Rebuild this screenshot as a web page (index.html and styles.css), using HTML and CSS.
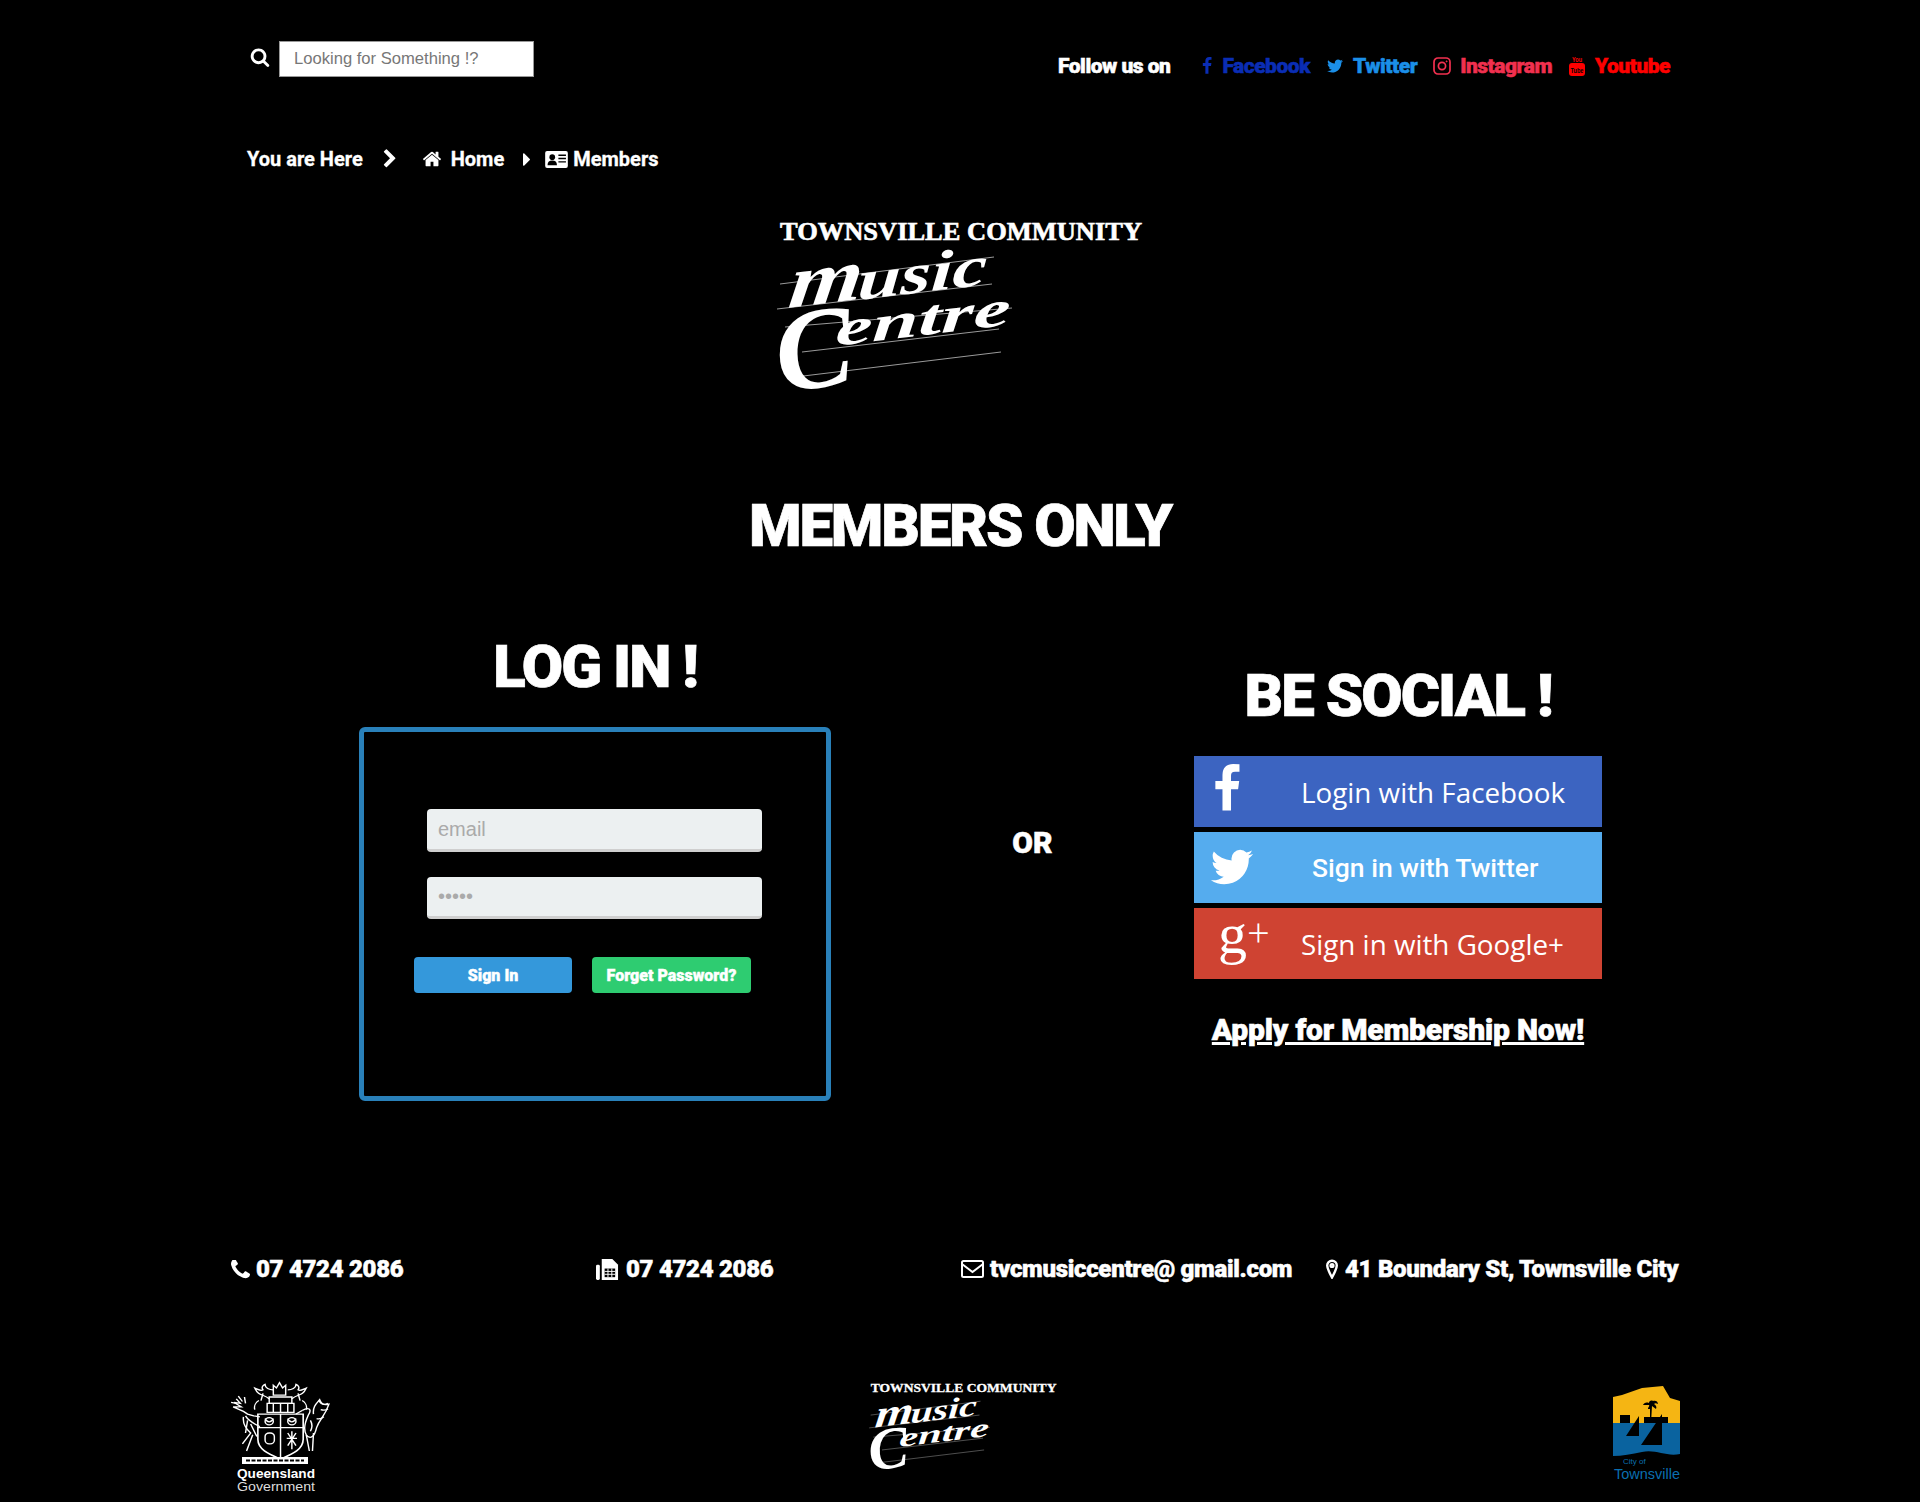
FILE: index.html
```html
<!DOCTYPE html>
<html lang="en">
  <head>
    <meta charset="UTF-8" />
    <title>Members Only</title>
    <link rel="stylesheet" href="styles.css">
  </head>

  <body>
    <svg class="defs" width="0" height="0">
      <symbol id="i-search" viewBox="0 0 1792 1792"><path d="M1216 832q0-185-131.500-316.500t-316.500-131.500-316.500 131.500-131.500 316.500 131.500 316.500 316.500 131.500 316.500-131.500 131.500-316.500zm512 832q0 52-38 90t-90 38q-54 0-90-38l-343-342q-179 124-399 124-143 0-273.500-55.500t-225-150-150-225-55.500-273.500 55.500-273.500 150-225 225-150 273.500-55.500 273.500 55.500 225 150 150 225 55.500 273.500q0 220-124 399l343 343q37 37 37 90z"/></symbol>
      <symbol id="i-f" viewBox="0 0 1792 1792"><path d="M1343 12v264h-157q-86 0-116 36t-30 108v189h293l-39 296h-254v759h-306v-759h-255v-296h255v-218q0-186 104-288.500t277-102.500q147 0 228 12z"/></symbol>
      <symbol id="i-tw" viewBox="0 0 1792 1792"><path d="M1684 408q-67 98-162 167 1 14 1 42 0 130-38 259.500t-115.500 248.500-184.500 210.500-258 146-323 54.500q-271 0-496-145 35 4 78 4 225 0 401-138-105-2-188-64.500t-114-159.500q33 5 61 5 43 0 85-11-112-23-185.500-111.500t-73.500-205.500v-4q68 38 146 41-66-44-105-115t-39-154q0-88 44-163 121 149 294.500 238.500t371.500 99.500q-8-38-8-74 0-134 94.500-228.500t228.500-94.500q140 0 236 102 109-21 205-78-37 115-142 178 92-10 184-50z"/></symbol>
    </svg>

    <div class="page">
      <div class="top">
        <div class="search">
          <svg class="search-icon" fill="#fff"><use href="#i-search" /></svg>
          <input class="search-input" type="text" placeholder="Looking for Something !?" />
        </div>
        <div class="follow">
          <span class="follow-label">Follow us on</span>
          <a class="soc soc-fb"><svg fill="currentColor"><use href="#i-f" /></svg>Facebook</a>
          <a class="soc soc-tw"><svg fill="currentColor"><use href="#i-tw" /></svg>Twitter</a>
          <a class="soc soc-in">
            <svg viewBox="0 0 18 18" fill="none" stroke="currentColor" stroke-width="1.700">
              <rect x="1" y="1" width="16" height="16" rx="4" />
              <circle cx="9" cy="9" r="3.600" />
              <circle cx="13.600" cy="4.400" r="0.600" fill="currentColor" stroke-width="0.700" />
            </svg>Instagram</a>
          <a class="soc soc-yt">
            <svg class="yt-icon" viewBox="0 0 18 21" fill="currentColor">
              <text class="yt-you" x="9" y="6.500" text-anchor="middle" textLength="10" lengthAdjust="spacingAndGlyphs">You</text>
              <rect x="1" y="8" width="16" height="13" rx="3" />
              <text class="yt-tube" x="9" y="17.500" text-anchor="middle" textLength="13" lengthAdjust="spacingAndGlyphs">Tube</text>
            </svg>Youtube</a>
        </div>
      </div>

      <div class="crumbs">
        <span class="crumb-here">You are Here</span>
        <svg class="crumb-chev" fill="#fff" viewBox="0 0 1792 1792"><path d="M1363 877l-742 742q-19 19-45 19t-45-19l-166-166q-19-19-19-45t19-45l531-531-531-531q-19-19-19-45t19-45l166-166q19-19 45-19t45 19l742 742q19 19 19 45t-19 45z"/></svg>
        <svg class="crumb-home" fill="#fff" viewBox="0 0 1792 1792"><path d="M1472 992v480q0 26-19 45t-45 19h-384v-384h-256v384h-384q-26 0-45-19t-19-45v-480q0-1 .5-3t.5-3l575-474 575 474q1 2 1 6zm223-69l-62 74q-8 9-21 11h-3q-13 0-21-7l-692-577-692 577q-12 8-24 7-13-2-21-11l-62-74q-8-10-7-23.500t11-21.500l719-599q32-26 76-26t76 26l244 204v-195q0-14 9-23t23-9h192q14 0 23 9t9 23v408l219 182q10 8 11 21.500t-7 23.500z"/></svg>
        <span class="crumb-link">Home</span>
        <svg class="crumb-caret" fill="#fff" viewBox="576 384 576 1024"><path d="M1152 896q0 26-19 45l-448 448q-19 19-45 19t-45-19-19-45v-896q0-26 19-45t45-19 45 19l448 448q19 19 19 45z"/></svg>
        <svg class="crumb-id" viewBox="0 0 24 18">
          <rect width="24" height="18" rx="2" fill="#fff" />
          <circle cx="7.500" cy="6.500" r="3" fill="#000" />
          <path d="M2.500 15c0-3.500 2-5 5-5s5 1.500 5 5z" fill="#000" />
          <path d="M14 4.500h8M14 8h8M14 11.500h8" stroke="#000" stroke-width="1.500" />
        </svg>
        <span class="crumb-link">Members</span>
      </div>

      <svg class="logo-main" viewBox="-14 -6 380 206" fill="#fff">
        <text class="logo-top" x="1" y="20" textLength="362" lengthAdjust="spacingAndGlyphs">TOWNSVILLE COMMUNITY</text>
        <g stroke="#ddd" stroke-width="0.700">
          <line x1="1" y1="64" x2="215" y2="37" />
          <line x1="-2" y1="89" x2="213" y2="64" />
          <line x1="6" y1="107" x2="233" y2="88" />
          <line x1="23" y1="132" x2="220" y2="109" />
          <line x1="16" y1="157" x2="222" y2="132" />
        </g>
        <text class="logo-script" transform="translate(8 88) rotate(-7) skewX(-14)" font-size="74" textLength="74" lengthAdjust="spacingAndGlyphs">m</text>
        <text class="logo-script" transform="translate(78 80) rotate(-7) skewX(-10)" font-size="56" textLength="130" lengthAdjust="spacingAndGlyphs">usic</text>
        <text class="logo-script" transform="translate(1 172) rotate(-7)" font-size="116">C</text>
        <text class="logo-script" transform="translate(56 126) rotate(-7) skewX(-10)" font-size="50" textLength="176" lengthAdjust="spacingAndGlyphs">entre</text>
      </svg>

      <h1 class="title">MEMBERS ONLY</h1>

      <div class="columns">
        <div class="col-login">
          <h2 class="col-title">LOG IN !</h2>
          <div class="login-box">
            <input class="field" type="text" placeholder="email" />
            <input class="field" type="password" placeholder="•••••" />
            <div class="login-btns">
              <a class="btn btn-blue">Sign In</a>
              <a class="btn btn-green">Forget Password?</a>
            </div>
          </div>
        </div>

        <div class="col-or">OR</div>

        <div class="col-social">
          <h2 class="col-title">BE SOCIAL !</h2>
          <a class="social-btn sb-fb"><svg class="sb-f" fill="#fff"><use href="#i-f" /></svg><span class="sb-text">Login with Facebook</span></a>
          <a class="social-btn sb-tw"><svg class="sb-bird" fill="#fff"><use href="#i-tw" /></svg><span class="sb-text sb-text-tw">Sign in with Twitter</span></a>
          <a class="social-btn sb-gp"><span class="sb-g">g<i>+</i></span><span class="sb-text">Sign in with Google+</span></a>
          <a class="apply">Apply for Membership Now!</a>
        </div>
      </div>

      <div class="contacts">
        <div class="contact">
          <svg class="ci-phone" fill="#fff" viewBox="192 192 1408 1408"><path d="M1600 1240q0 27-10 70.500t-21 68.500q-21 50-122 106-94 51-186 51-27 0-53-3.500t-57.500-12.500-47-14.500-55.500-20.500-49-18q-98-35-175-83-127-79-264-216t-216-264q-48-77-83-175-3-9-18-49t-20.500-55.500-14.500-47-12.500-57.500-3.500-53q0-92 51-186 56-101 106-122 25-11 68.500-21t70.500-10q14 0 21 3 18 6 53 76 11 19 30 54t35 63.500 31 53.500q3 4 17.500 25t21.500 35.500 7 28.500q0 20-28.500 50t-62 55-62 53-28.500 46q0 9 5 22.500t8.500 20.500 14 24 11.500 19q76 137 174 235t235 174q2 1 19 11.500t24 14 20.500 8.500 22.500 5q18 0 46-28.500t53-62 55-62 50-28.500q14 0 28.500 7t35.500 21.500 25 17.500q25 15 53.500 31t63.500 35 54 30q70 35 76 53 3 7 3 21z"/></svg>
          07 4724 2086
        </div>
        <div class="contact contact-wide">
          <svg class="ci-fax" viewBox="0 0 24 24">
            <rect x="0" y="7" width="4" height="16" rx="1.500" fill="#fff" />
            <path d="M6 1h11l6 6v16H6z" fill="#fff" />
            <path d="M9 11h11v9H9z" fill="#000" />
            <path d="M12.500 11v9M16.500 11v9M9 14h11M9 17h11" stroke="#fff" stroke-width="1" />
          </svg>
          07 4724 2086
        </div>
        <div class="contact">
          <svg class="ci-mail" viewBox="0 0 23 18" fill="none" stroke="#fff" stroke-width="2">
            <rect x="1" y="1" width="21" height="16" rx="1.500" />
            <path d="M1 4l10.500 8L22 4" />
          </svg>
          tvcmusiccentre@ gmail.com
        </div>
        <div class="contact contact-wide">
          <svg class="ci-pin" viewBox="0 0 12 20" fill="none" stroke="#fff" stroke-width="2.400">
            <path d="M6 18.500C3 13 1.200 9.500 1.200 6.500a4.800 4.800 0 0 1 9.600 0C10.800 9.500 9 13 6 18.500z" />
            <circle cx="6" cy="6.500" r="1.400" />
          </svg>
          41 Boundary St, Townsville City
        </div>
      </div>

      <div class="foot">
        <svg class="crest" viewBox="0 0 102 117">
          <g fill="none" stroke="#fff" stroke-width="1.400" transform="scale(1.03 .9)">
            <!-- crown and mantling -->
            <path d="M44 18V7l3 3 3-6 3 6 3-3v11z" />
            <path d="M40 20h22v7H40z" />
            <path d="M40 22C34 16 30 20 26 10c4 2 6 4 8 2-2-3 0-5 2-6 0 4 4 6 8 6M62 22c6-6 10-2 14-12-4 2-6 4-8 2 2-3 0-5-2-6 0 4-4 6-8 6" />
            <path d="M30 24c-3 2-5 6-4 10M72 24c3 2 5 6 4 10M34 16l-2 8M68 16l2 8" />
            <!-- stag -->
            <path d="M8 22l4 5-6-1 7 5-8 0 10 5 4 3 6 2 6 1M17 41c3 6 9 9 14 12M15 42c-1 8 3 14 7 18l-8 12M24 62l-6 18" />
            <path d="M10 19l4 6M16 20l1 7M3 26l5 1M19 46l-2 14M22 50l6 14" />
            <!-- brolga -->
            <path d="M72 35c6-4 10-2 6 5-2 5-6 14-2 22 4 6 8 2 10-8 3-10 8-12 12-26-6 2-8-2-9-5-3 4-7 8-6 16" />
            <path d="M72 35l-6 4M76 62l3 18M83 60l-1 20" />
            <path d="M88 24c3 5 6 5 9 3M90 34c3 1 5 1 7-1M86 44c3 1 5 0 7-2M80 46c2 4 2 8 0 12" />
            <!-- shield -->
            <path d="M29 39h44v28c0 12-12 17-22 22-10-5-22-10-22-22z" stroke-width="1.600" />
            <path d="M29 54h44M51 39v49" />
            <circle cx="40" cy="47" r="4" />
            <circle cx="62" cy="47" r="4" />
            <path d="M36 44c2 5 6 5 8 0M58 44c2 5 6 5 8 0" />
            <rect x="36" y="60" width="9" height="12" rx="4" />
            <path d="M62 58v20M57 66h10M58 60l8 14M66 60l-8 14" />
            <path d="M38 27h26v10H38zM44 27v10M51 27v10M58 27v10" />
          </g>
          <path d="M14 78h66v7H14z" fill="#fff" />
          <path d="M18 81.500h58" stroke="#000" stroke-width="2" stroke-dasharray="4 1.500" />
          <text class="crest-q" x="9" y="98.500" textLength="78" lengthAdjust="spacingAndGlyphs">Queensland</text>
          <text class="crest-g" x="9" y="112" textLength="78" lengthAdjust="spacingAndGlyphs">Government</text>
        </svg>
        <svg class="logo-small" viewBox="-14 -6 380 206" fill="#fff">
          <text class="logo-top" x="1" y="20" textLength="362" lengthAdjust="spacingAndGlyphs">TOWNSVILLE COMMUNITY</text>
          <g stroke="#ddd" stroke-width="0.700">
            <line x1="1" y1="64" x2="215" y2="37" />
            <line x1="-2" y1="89" x2="213" y2="64" />
            <line x1="6" y1="107" x2="233" y2="88" />
            <line x1="23" y1="132" x2="220" y2="109" />
            <line x1="16" y1="157" x2="222" y2="132" />
          </g>
          <text class="logo-script" transform="translate(8 88) rotate(-7) skewX(-14)" font-size="74" textLength="74" lengthAdjust="spacingAndGlyphs">m</text>
          <text class="logo-script" transform="translate(78 80) rotate(-7) skewX(-10)" font-size="56" textLength="130" lengthAdjust="spacingAndGlyphs">usic</text>
          <text class="logo-script" transform="translate(1 172) rotate(-7)" font-size="116">C</text>
          <text class="logo-script" transform="translate(56 126) rotate(-7) skewX(-10)" font-size="50" textLength="176" lengthAdjust="spacingAndGlyphs">entre</text>
        </svg>
        <svg class="town" viewBox="12 12 72 96">
          <path d="M13 24l9-2 20-7 21-2 7 12 10 3v22H13z" fill="#f5b513" />
          <path d="M20 42h10v8H20zM44 44h24v6H44z" fill="#000" />
          <path d="M50 50V36h-2c0-2 2-3 1-4h-6c1-2 3-3 6-2 0-2 2-3 4-2 2-1 5 0 5 3-2-1-3-1-4 0 2 1 3 3 2 5l-4-3-1 17z" fill="#000" />
          <path d="M13 50h67v31c-14 3-24-5-38-2-10 2-20 4-29 4z" fill="#0a639f" />
          <path d="M26 63l13-20v20zM41 72l21-31v31z" fill="#000" />
          <text class="town-a" x="23" y="90.500">City of</text>
          <text class="town-b" x="14" y="106" textLength="66" lengthAdjust="spacingAndGlyphs">Townsville</text>
        </svg>
      </div>
    </div>
  </body>
</html>
```

FILE: styles.css
```css
html,
body {
  margin: 0;
  background: #000;
}
body {
  color: #fff;
  font-family: Roboto, "Liberation Sans", sans-serif;
  font-weight: 900;
  overflow-x: hidden;
}
a {
  color: inherit;
}
svg {
  display: block;
  flex: none;
}
.defs {
  position: absolute;
}
.page {
  width: 1920px;
  height: 1502px;
  overflow: hidden;
}

/* top bar */
.top {
  display: flex;
  justify-content: space-between;
  padding: 41px 250px 0 250px;
  height: 36px;
}
.search {
  display: flex;
  align-items: center;
}
.search-icon {
  width: 20px;
  height: 20px;
  margin: -4px 9px 0 0;
}
.search-input {
  width: 255px;
  height: 36px;
  box-sizing: border-box;
  border: 1px solid #999;
  padding: 0 14px;
  background: #fff;
  font: 16.600px "Liberation Sans", Arial, sans-serif;
}
.search-input::placeholder {
  color: #777;
}
.follow {
  display: flex;
  align-items: center;
  height: 50px;
  font-size: 21px;
  letter-spacing: -0.5px;
  -webkit-text-stroke: 0.5px;
}
.follow-label {
  margin-right: 28px;
}
.soc {
  display: flex;
  align-items: center;
  margin-right: 16px;
}
.soc:last-child {
  margin-right: 0;
}
.soc svg {
  width: 18px;
  height: 18px;
  margin-right: 9px;
  -webkit-text-stroke: 0;
}
.soc-fb svg {
  margin-right: 6px;
}
.soc .yt-icon {
  height: 21px;
  margin-top: -2px;
}
.soc-fb {
  color: #0a2db4;
}
.soc-tw {
  color: #1b8fe8;
}
.soc-in {
  color: #f1304f;
}
.soc-yt {
  color: #f00;
}
.yt-you {
  font: 700 7px "Liberation Sans", sans-serif;
  letter-spacing: 0;
}
.yt-tube {
  font: 700 6.500px "Liberation Sans", sans-serif;
  letter-spacing: 0;
  fill: #000;
}

/* breadcrumb */
.crumbs {
  display: flex;
  align-items: center;
  height: 24px;
  margin-top: 70px;
  padding-left: 247px;
  font-size: 20px;
  font-weight: 700;
  -webkit-text-stroke: 0.3px;
}
.crumb-chev {
  width: 20px;
  height: 20px;
  margin: 0 0 0 17px;
}
.crumb-home {
  width: 20px;
  height: 20px;
  margin: 0 9px 0 22px;
}
.crumb-caret {
  width: 7px;
  height: 13px;
  margin: 0 15px 0 19px;
}
.crumb-id {
  width: 23px;
  height: 17px;
  margin-right: 5px;
}

/* logo */
.logo-main {
  width: 380px;
  height: 206px;
  margin: 43px 0 0 765px;
}
.logo-top {
  font: 700 25px "Liberation Serif", serif;
  stroke: #fff;
  stroke-width: 0.600px;
}
.logo-script {
  font-family: "Liberation Serif", serif;
  font-style: italic;
  font-weight: 700;
}

.title {
  margin: 71px 0 0;
  font-size: 60px;
  line-height: 70px;
  font-weight: 900;
  text-align: center;
  letter-spacing: -2.200px;
  -webkit-text-stroke: 0.7px;
}

/* main columns */
.columns {
  display: flex;
  height: 694px;
}
.col-title {
  margin: 0;
  font-size: 60px;
  line-height: 70px;
  font-weight: 900;
  text-align: center;
  letter-spacing: -2px;
  -webkit-text-stroke: 0.7px;
}
.col-login {
  width: 472px;
  margin: 71px 0 0 359px;
}
.login-box {
  box-sizing: border-box;
  width: 472px;
  height: 374px;
  margin-top: 25px;
  padding: 77px 59px 0 50px;
  border: 5px solid #2980b9;
  border-radius: 6px;
}
.field {
  display: block;
  box-sizing: border-box;
  width: 335px;
  height: 43px;
  margin: 0 0 25px 13px;
  padding: 0 11px;
  border: 0;
  border-bottom: 3px solid #cfcfcf;
  border-radius: 4px;
  background: #ecf0f1;
  font: 20px "Liberation Sans", Arial, sans-serif;
}
.field::placeholder {
  color: #aaa;
}
.field + .field {
  height: 42px;
}
.login-btns {
  display: flex;
  gap: 20px;
  margin-top: 38px;
}
.btn {
  display: flex;
  align-items: center;
  justify-content: center;
  height: 36px;
  border-radius: 4px;
  font-size: 16px;
  -webkit-text-stroke: 0.4px;
}
.btn-blue {
  width: 158px;
  background: #3498db;
}
.btn-green {
  width: 159px;
  background: #2ecc71;
}
.col-or {
  box-sizing: border-box;
  width: 363px;
  margin-top: 265px;
  padding-left: 40px;
  font-size: 30px;
  line-height: 34px;
  text-align: center;
  -webkit-text-stroke: 0.5px;
}
.col-social {
  width: 408px;
  margin-top: 100px;
}
.col-social .col-title {
  margin-bottom: 25px;
}
.social-btn {
  display: flex;
  align-items: center;
  position: relative;
  height: 71px;
  margin-bottom: 5px;
  font: 500 27.800px "Open Sans", sans-serif;
}
.sb-fb {
  background: #3c64c1;
}
.sb-tw {
  background: #55acee;
  font: 500 26.500px Roboto, sans-serif;
}
.sb-gp {
  background: #cf4332;
}
.sb-text {
  margin-left: 107px;
  white-space: nowrap;
}
.sb-text-tw {
  margin-left: 118px;
}
.sb-f {
  position: absolute;
  left: 8px;
  top: 8px;
  width: 50px;
  height: 50px;
}
.sb-bird {
  position: absolute;
  left: 14px;
  top: 11px;
  width: 48px;
  height: 48px;
}
.sb-g {
  position: absolute;
  left: 24px;
  top: -3px;
  font: 400 58px "Liberation Serif", serif;
  line-height: 58px;
}
.sb-g i {
  position: absolute;
  left: 29px;
  top: -1px;
  font: 300 40px "Open Sans", sans-serif;
}
.apply {
  display: block;
  margin-top: 33px;
  font-size: 30px;
  line-height: 36px;
  text-align: center;
  text-decoration: underline;
  letter-spacing: -0.2px;
  -webkit-text-stroke: 0.6px;
}

/* contact row */
.contacts {
  display: grid;
  grid-template-columns: repeat(4, 365px);
  padding-left: 231px;
  font-size: 24px;
  line-height: 28px;
  letter-spacing: -0.3px;
  -webkit-text-stroke: 0.5px;
}
.contact {
  display: flex;
  align-items: center;
  gap: 6px;
  white-space: nowrap;
}
.contact-wide {
  gap: 7px;
}
.ci-phone {
  width: 19px;
  height: 19px;
}
.ci-fax {
  width: 23px;
  height: 23px;
}
.ci-mail {
  width: 23px;
  height: 18px;
}
.ci-pin {
  width: 12px;
  height: 20px;
}

/* footer logos */
.foot {
  display: grid;
  grid-template-columns: 642px 742px 72px;
  padding-left: 228px;
  margin-top: 96px;
}
.crest {
  width: 102px;
  height: 117px;
}
.crest-q {
  font: 700 12.500px "Liberation Sans", sans-serif;
  fill: #fff;
}
.crest-g {
  font: 400 12px "Liberation Sans", sans-serif;
  fill: #ddd;
}
.logo-small {
  width: 195px;
  height: 106px;
  margin-left: -7px;
}
.town {
  width: 72px;
  height: 96px;
  margin-top: 6px;
}
.town-a {
  font: 400 8px "Liberation Sans", sans-serif;
  fill: #0a6fb0;
}
.town-b {
  font: 400 14px "Liberation Sans", sans-serif;
  fill: #0a6fb0;
}
```
